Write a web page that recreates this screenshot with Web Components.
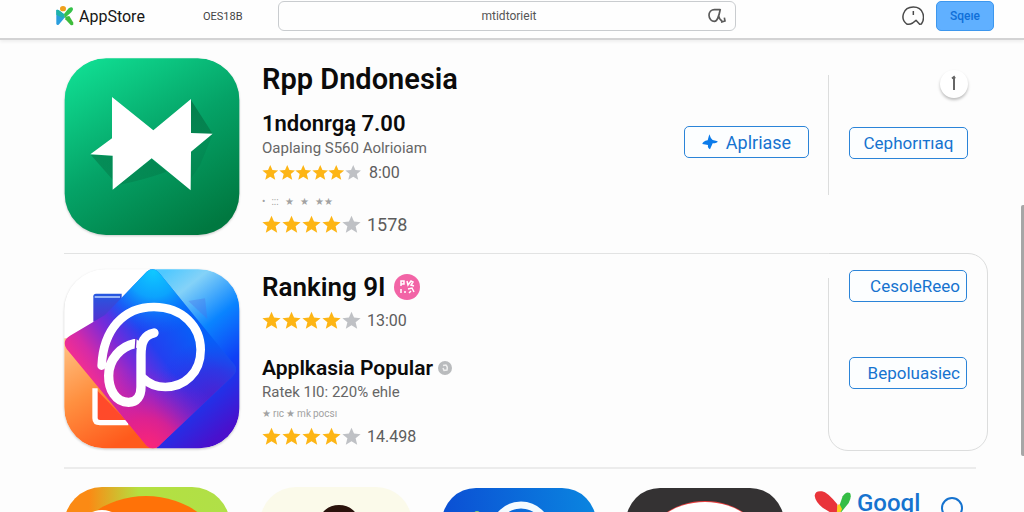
<!DOCTYPE html>
<html lang="id">
<head>
<meta charset="utf-8">
<title>AppStore</title>
<style>
  body { margin: 0; height: 100vh; overflow: hidden; background: #fdfdfd; font-family: Roboto, "Noto Sans", sans-serif; color: #0b0b0b; }
</style>
</head>
<body>
<store-page></store-page>

<template id="store-page">
  <style>
    :host { display: block; }
    .thumb { position: fixed; right: 0; top: 40%; width: 3px; height: 49%; border-radius: 2px 0 0 2px; background: #a6a6a6; }
    h1, h2, p { margin: 0; }
    h1 { font-size: 29px; line-height: 42px; font-weight: 600; display: flex; align-items: center; gap: 8px; }
    h2 { font-size: 22px; line-height: 24px; font-weight: 600; display: flex; align-items: center; gap: 5px; }
    .first h2 { margin-top: 12px; }
    .second h1 { font-size: 26px; }
    .second h2 { margin-top: 24px; font-size: 21px; }
    p { font-size: 15px; line-height: 24px; color: #666; }
    .tiny { font-size: 10px; line-height: 20px; color: #a2a2a2; display: flex; gap: 2px; }
    .first .tiny { margin-top: 8px; gap: 6px; }
    .info { position: relative; align-self: flex-end; width: 28px; height: 28px; margin-top: -5px; border: 0; padding: 0; border-radius: 50%; background: #fff; box-shadow: 0 2px 3px rgba(0,0,0,.25); }
    .info svg, .badge, .dot { display: block; }
  </style>
  <store-header></store-header>
  <main>
    <app-row class="first">
      <svg slot="icon" width="176" height="178" viewBox="42 39 528 534" preserveAspectRatio="none" aria-label="Rpp Dndonesia" role="img">
        <defs>
          <linearGradient id="g1" x1=".15" y1="0" x2=".75" y2="1"><stop offset="0" stop-color="#10dd92"/><stop offset=".5" stop-color="#05a367"/><stop offset="1" stop-color="#007840"/></linearGradient>
          <linearGradient id="sh" x1="0" y1="0" x2=".3" y2="1"><stop offset="0" stop-color="#046b3f" stop-opacity=".8"/><stop offset="1" stop-color="#046b3f" stop-opacity=".3"/></linearGradient>
          <clipPath id="c1"><rect x="44" y="40" width="524" height="530" rx="124"/></clipPath>
        </defs>
        <g clip-path="url(#c1)">
          <rect x="42" y="39" width="528" height="534" fill="url(#g1)"/>
          <path d="M423 165 488 266 423 268ZM122 329 188 332 188 404ZM305 342 350 380Q280 405 205 420Z" fill="url(#sh)"/>
          <path d="M423 320 488 267 450 360 423 400Z" fill="#046b3f" opacity=".2"/>
        </g>
        <path d="M186 156 310 256 423 162 423 264 488 266 423 320 422 436 305 340 188 434 188 332 121 328 186 280Z" fill="#fff"/>
      </svg>
      <h1>Rpp Dndonesia</h1>
      <h2>1ndonrgą 7.00</h2>
      <p>Oaplaing S560 Aolrioiam</p>
      <star-rating filled="5" total="6">8:00</star-rating>
      <div class="tiny"><span>•</span><span>:::</span><span>★</span><span>★</span><span>★★</span></div>
      <star-rating filled="4" total="5" large style="font-size:18px">1578</star-rating>
      <outline-button slot="action" icon>Aplriase</outline-button>
      <app-rail slot="rail">
        <button class="info" aria-label="Info"><svg width="28" height="28" viewBox="0 0 28 28" fill="none" stroke="#666" stroke-width="2"><path d="M14 20V7M12 8.500 14 7 15 8.500"/></svg></button>
        <outline-button style="margin-top:29px">Cephorıтıaq</outline-button>
      </app-rail>
    </app-row>
    <app-row class="second" divided>
      <svg slot="icon" width="176" height="180" viewBox="42 42 528 540" aria-label="Ranking" role="img">
        <defs>
          <clipPath id="c2"><rect x="43" y="43" width="525" height="537" rx="118"/></clipPath>
          <linearGradient id="sky" x1=".2" y1="0" x2=".6" y2="1"><stop offset="0" stop-color="#4fc8ff"/><stop offset=".16" stop-color="#84d2f8"/><stop offset=".42" stop-color="#0a84ff"/><stop offset=".68" stop-color="#1040f5"/><stop offset="1" stop-color="#4a10cc"/></linearGradient>
          <linearGradient id="or" x1="0" y1="0" x2=".5" y2="1"><stop offset="0" stop-color="#ffc488"/><stop offset=".5" stop-color="#ff9040"/><stop offset="1" stop-color="#ff5a1c"/></linearGradient>
          <linearGradient id="dia" gradientUnits="userSpaceOnUse" x1="110" y1="400" x2="400" y2="180"><stop offset="0" stop-color="#ff3088"/><stop offset=".2" stop-color="#d42aa8"/><stop offset=".42" stop-color="#7a2ad8"/><stop offset=".65" stop-color="#2340f0"/><stop offset="1" stop-color="#0660f8"/></linearGradient>
          <radialGradient id="cy" gradientUnits="userSpaceOnUse" cx="310" cy="50" r="190"><stop offset="0" stop-color="#10c8ff"/><stop offset=".4" stop-color="#0cb0ff" stop-opacity=".85"/><stop offset="1" stop-color="#0a6cff" stop-opacity="0"/></radialGradient>
          <radialGradient id="mg" gradientUnits="userSpaceOnUse" cx="290" cy="590" r="250"><stop offset="0" stop-color="#ff2673"/><stop offset=".4" stop-color="#e0208c" stop-opacity=".85"/><stop offset="1" stop-color="#8a1cd0" stop-opacity="0"/></radialGradient>
          <radialGradient id="vi" gradientUnits="userSpaceOnUse" cx="500" cy="440" r="190"><stop offset="0" stop-color="#5a18c8" stop-opacity=".9"/><stop offset=".5" stop-color="#4420d8" stop-opacity=".6"/><stop offset="1" stop-color="#2a30e8" stop-opacity="0"/></radialGradient>
          <linearGradient id="fr" x1="0" y1="0" x2="0" y2="1"><stop offset="0" stop-color="#2458e0"/><stop offset="1" stop-color="#5430d0"/></linearGradient>
        </defs>
        <g clip-path="url(#c2)">
          <rect x="42" y="42" width="528" height="540" fill="#fff"/>
          <path d="M42 250H320V582H42Z" fill="url(#or)"/>
          <path d="M300 42H570V582H320Z" fill="url(#sky)"/>
          <path d="M415 138 465 130 472 192Z" fill="#4a70e8" opacity=".35"/>
          <path d="M130 200V124Q130 116 138 116H215V200Z" fill="url(#fr)"/>
          <path d="M134 126H210" stroke="#bcd6ff" stroke-width="4"/>
          <path d="M135 400V490Q135 503 150 503H235" fill="#ff4a2a" stroke="#fff" stroke-width="16"/>
          <path d="M290 50Q310 34 328 54L552 328Q566 346 548 364L335 565Q312 592 290 572L50 282Q34 258 60 242L165 180Z" fill="url(#dia)"/>
          <path d="M290 50Q310 34 328 54L552 328Q566 346 548 364L335 565Q312 592 290 572L50 282Q34 258 60 242L165 180Z" fill="url(#vi)"/>
          <path d="M290 50Q310 34 328 54L552 328Q566 346 548 364L335 565Q312 592 290 572L50 282Q34 258 60 242L165 180Z" fill="url(#cy)"/>
          <path d="M290 50Q310 34 328 54L552 328Q566 346 548 364L335 565Q312 592 290 572L50 282Q34 258 60 242L165 180Z" fill="url(#mg)"/>
          <g fill="none" stroke="#fff" stroke-linecap="round">
            <path d="M155 332C160 225 220 156 312 156C398 156 452 216 452 284C452 355 402 396 346 396C318 396 296 386 280 370" stroke-width="26"/>
            <path d="M312 234C282 240 273 262 273 300V396C273 424 260 442 236 442C196 442 176 402 176 362C176 312 214 274 254 266" stroke-width="28"/>
            <path d="M258 250 256 280" stroke="#6a25c8" stroke-width="4"/>
          </g>
        </g>
      </svg>
      <h1>Ranking 9I
        <svg class="badge" width="26" height="26" viewBox="0 0 26 26" aria-hidden="true"><circle cx="13" cy="13" r="13" fill="#f264a6"/><g fill="none" stroke="#fff" stroke-width="1.500"><path d="M7 12V7H10V10H7M13 7 14 11 17 7 19 8 17 11 20 12M7 15V19M10 18H12M14 15 18 14 20 18M15 19 17 17"/></g></svg>
      </h1>
      <star-rating filled="4" total="5" large>13:00</star-rating>
      <h2>Applkasia Popular
        <svg class="dot" width="14" height="14" viewBox="0 0 14 14" aria-hidden="true"><circle cx="7" cy="7" r="7" fill="#b9bbbd"/><path d="M5 4.500 8 4Q10 6 9 9L6 9.500 5 7" fill="none" stroke="#eee" stroke-width="1.500"/></svg>
      </h2>
      <p>Ratek 1I0: 220% ehle</p>
      <div class="tiny"><span>★</span><span>rıc</span><span>★</span><span>mk</span><span>pocsı</span></div>
      <star-rating filled="4" total="5" large>14.498</star-rating>
      <app-rail slot="rail" card>
        <outline-button end>CesoleReeo</outline-button>
        <outline-button end style="margin-top:55px">Bepoluasiec</outline-button>
      </app-rail>
    </app-row>
    <app-shelf></app-shelf>
  </main>
  <div class="thumb"></div>
</template>

<template id="store-header">
  <style>
    :host { display: block; position: relative; background: #fefefe; border-bottom: 2px solid #d3d3d4; box-shadow: 0 2px 3px rgba(0,0,0,.06); }
    header { display: grid; grid-template-columns: 147px 75px minmax(0, 1fr) 258px; height: 38px; align-items: center; padding: 0 30px 6px 56px; box-sizing: border-box; }
    a { color: #161616; text-decoration: none; }
    .brand { display: flex; align-items: center; gap: 5px; font-size: 16px; }
    .nav { font-size: 11px; color: #444; }
    label { display: flex; align-items: center; height: 28px; border: 1px solid #c9cccf; border-radius: 6px; padding: 0 8px; background: #fefefe; }
    input { flex: 1; min-width: 0; border: 0; outline: 0; background: none; text-align: center; font: 12px Roboto, sans-serif; color: #555; padding: 0 0 0 24px; }
    .end { display: flex; justify-content: flex-end; align-items: center; gap: 12px; }
    .bell { border: 0; background: none; padding: 0; width: 22px; height: 22px; }
    .sign { width: 58px; height: 30px; border: 1px solid #3d97ee; border-radius: 5px; background: #60b0ff; color: #0f6fd8; font: 500 12px Roboto, sans-serif; padding: 0; }
    svg { display: block; }
  </style>
  <header>
    <a class="brand" href="#"><svg width="18" height="20" viewBox="0 0 54 60" aria-hidden="true"><ellipse cx="21" cy="8" rx="9" ry="8" fill="#f0a01c"/><path d="M1 12Q4 10 10 14L24 24 27 34 8 56Q1 60 1 52Z" fill="#2a9ede"/><path d="M1 12Q5 9 12 15L26 26 20 36 1 26Z" fill="#1fb3a8"/><path d="M24 24 38 7Q48 0 51 8 52 14 40 24L26 36Z" fill="#35c24a"/><path d="M28 32 40 30 52 50Q54 60 44 57L28 40Z" fill="#3dbb3a"/></svg><span>AppStore</span></a>
    <a class="nav" href="#">OES18B</a>
    <label><input type="text" value="mtidtorieit" aria-label="Search"><svg width="20" height="18" viewBox="0 0 60 54" fill="none" stroke="#5a5a5a" stroke-width="5"><path d="M40 8H22C12 8 6 16 6 25C6 36 14 43 22 43C32 43 36 26 40 6M35 26C37 36 40 40 46 42M42 46 54 42 52 32"/></svg></label>
    <div class="end">
      <button class="bell" aria-label="Notifications"><svg width="22" height="22" viewBox="0 0 66 66" fill="none" stroke="#4a4a4a" stroke-width="4.500" stroke-linejoin="round"><path d="M14 57C-6 42 2 6 34 6C66 6 70 40 58 57L53 58 42 46 32 54Q22 60 14 57ZM34 18V30"/></svg></button>
      <button class="sign">Sqeıe</button>
    </div>
  </header>
</template>

<template id="app-row">
  <style>
    :host { display: flex; }
    .main { flex: 1; min-width: 0; display: flex; gap: 22px; padding: 18px 19px 17px 0; margin-left: 64px; box-sizing: border-box; }
    .text { flex: 1; min-width: 0; }
    .side { width: 160px; margin-right: 36px; }
    .action { padding-top: 68px; }
    :host([divided]) .main { border-top: 1px solid #e2e3e3; padding: 12px 19px 18px 0; }
    :host([divided]) .media { padding-top: 3px; }
    ::slotted(svg) { display: block; border-radius: 42px; filter: drop-shadow(0 1px 1px rgba(0,0,0,.2)); }
  </style>
  <div class="main">
    <div class="media"><slot name="icon"></slot></div>
    <div class="text"><slot></slot></div>
    <div class="action"><slot name="action"></slot></div>
  </div>
  <div class="side"><slot name="rail"></slot></div>
</template>

<template id="app-rail">
  <style>
    :host { display: flex; flex-direction: column; box-sizing: border-box; height: 120px; margin-top: 35px; padding: 0 20px; border-left: 1px solid #dcdddd; }
    :host([card]) { position: relative; height: 198px; margin-top: 0; padding: 16px 20px; border: 1px solid #dcdddd; border-radius: 0 20px 20px 20px; }
    :host([card])::before { content: ""; position: absolute; left: -1px; top: 0; width: 1px; height: 24px; background: #fdfdfd; }
  </style>
  <slot></slot>
</template>

<template id="outline-button">
  <style>
    :host { display: block; }
    button { display: flex; align-items: center; justify-content: center; gap: 8px; width: 100%; height: 32px; box-sizing: border-box; border: 1px solid #2b84d8; border-radius: 5px; background: #fcfeff; color: #1673cf; font: 17px Roboto, sans-serif; padding: 0 6px; white-space: nowrap; }
    :host([icon]) button { width: 125px; font-size: 18px; }
    :host([end]) button { justify-content: flex-end; }
    svg { display: none; }
    :host([icon]) svg { display: block; }
  </style>
  <button><svg width="16" height="16" viewBox="0 0 48 48" aria-hidden="true"><path d="M22 1Q26 14 32 18L47 22Q46 28 32 28L24 46Q16 42 18 33L1 30Q2 22 17 19Z" fill="#0b7bea"/></svg><span><slot></slot></span></button>
</template>

<template id="star-rating">
  <style>
    :host { display: flex; align-items: center; gap: 8px; height: 24px; font-size: 16px; color: #5c5c5c; }
    .stars { display: flex; justify-content: space-between; width: 99px; }
    svg { display: block; width: 17px; height: 17px; fill: #fdb515; }
    :host([large]) svg { width: 19px; height: 19px; }
    :host([large]) { gap: 6px; }
    svg.off { fill: #bfc1c5; }
  </style>
  <div class="stars"></div><span><slot></slot></span>
</template>

<template id="app-shelf">
  <style>
    :host { display: block; margin: 0 48px 0 64px; border-top: 2px solid #ececec; padding-top: 18px; }
    .shelf { display: flex; align-items: flex-start; gap: 30px; height: 150px; }
    svg { display: block; flex: none; }
    a { display: flex; align-items: flex-start; gap: 5px; color: #1673cf; text-decoration: none; font-size: 24px; line-height: 32px; font-weight: 500; }
    .find { border: 0; background: none; padding: 9px 0 0; margin-left: -10px; }
  </style>
  <div class="shelf">
    <svg width="166" height="150" viewBox="0 0 166 150" role="img" aria-label="App"><defs><linearGradient id="s1"><stop offset=".15" stop-color="#fb8a14"/><stop offset=".45" stop-color="#b4e040"/><stop offset="1" stop-color="#b0e048"/></linearGradient><clipPath id="k1"><rect width="166" height="150" rx="38"/></clipPath></defs><g clip-path="url(#k1)"><rect width="166" height="150" fill="url(#s1)"/><ellipse cx="82" cy="70" rx="76" ry="61" fill="#ff7208"/><ellipse cx="38" cy="38" rx="20" ry="15" fill="#fff"/></g></svg>
    <svg width="152" height="150" viewBox="0 0 152 150" role="img" aria-label="App"><rect width="152" height="150" rx="36" fill="#fbfaea"/><ellipse cx="79" cy="36" rx="20" ry="18" fill="#2a120c"/></svg>
    <svg width="154" height="150" viewBox="0 -1 154 150" role="img" aria-label="App"><defs><linearGradient id="s3" x1="0" y1=".1" x2="1" y2="0"><stop offset="0" stop-color="#0b4fd4"/><stop offset="1" stop-color="#0a86e0"/></linearGradient></defs><rect width="154" height="150" rx="34" fill="url(#s3)"/><circle cx="79" cy="44" r="27" fill="none" stroke="#f4fbff" stroke-width="7"/><circle cx="35" cy="26" r="3" fill="#8ed66a"/></svg>
    <svg width="158" height="150" viewBox="0 -1 158 150" role="img" aria-label="App"><rect width="158" height="150" rx="34" fill="#343233"/><ellipse cx="79" cy="58" rx="58" ry="45" fill="#e84040"/><ellipse cx="79" cy="60" rx="59" ry="46" fill="#fff"/></svg>
    <a href="#"><svg width="38" height="36" viewBox="0 0 114 108" aria-hidden="true"><path d="M74 62 86 28Q96 12 108 18 114 30 104 48L78 80Z" fill="#35bd45"/><path d="M2 26Q4 10 24 13 40 15 70 52L74 90Q40 72 26 62 4 44 2 26Z" fill="#e9343a"/><path d="M70 56 76 50 84 66 76 84 68 84Z" fill="#fbd01c"/></svg>Googl</a>
    <button class="find" aria-label="Search"><svg width="24" height="32" viewBox="0 0 24 32" fill="none" stroke="#1673cf" stroke-width="2"><circle cx="12" cy="12" r="10"/><path d="M18 20 23 27"/></svg></button>
  </div>
</template>

<script>
  // Attaches an open shadow root holding a copy of the template named after the element.
  class TemplateElement extends HTMLElement {
    constructor() {
      super();
      const source = document.getElementById(this.localName);
      this.attachShadow({ mode: 'open' }).append(source.content.cloneNode(true));
    }
  }
  class OutlineButton extends TemplateElement {}
  class AppRail extends TemplateElement {}
  class AppRow extends TemplateElement {}
  class AppShelf extends TemplateElement {}
  class StoreHeader extends TemplateElement {}
  class StorePage extends TemplateElement {}
  class StarRating extends TemplateElement {
    connectedCallback() {
      const total = Number(this.getAttribute('total'));
      const filled = Number(this.getAttribute('filled'));
      let stars = '';
      for (let i = 0; i < total; i++) {
        stars += `<svg class="${i < filled ? 'on' : 'off'}" viewBox="0 0 24 24" aria-hidden="true"><path d="M12 1 15.200 8.300 23.500 9 17.200 14.300 19.200 22.500 12 18.100 4.800 22.500 6.800 14.300 .5 9 8.800 8.300Z"/></svg>`;
      }
      this.shadowRoot.querySelector('.stars').innerHTML = stars;
    }
  }
  customElements.define('outline-button', OutlineButton);
  customElements.define('star-rating', StarRating);
  customElements.define('app-rail', AppRail);
  customElements.define('app-row', AppRow);
  customElements.define('app-shelf', AppShelf);
  customElements.define('store-header', StoreHeader);
  customElements.define('store-page', StorePage);
</script>
</body>
</html>
